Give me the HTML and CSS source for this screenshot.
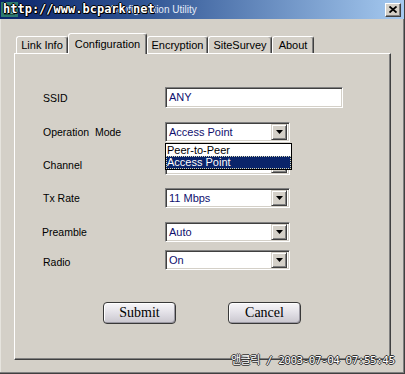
FILE: index.html
```html
<!DOCTYPE html>
<html>
<head>
<meta charset="utf-8">
<title>Configuration Utility</title>
<link rel="stylesheet" href="styles.css">
</head>
<body>
<div class="window">
  <div class="titlebar">
    <span class="app-icon"><span class="app-icon-inner"></span></span>
    <span class="title-text">Configuration Utility</span>
    <span class="close-btn">
      <svg width="8" height="7" viewBox="0 0 8 7"><path d="M0.5 0.5 L7.5 6.5 M7.5 0.5 L0.5 6.5" stroke="#000" stroke-width="1.8"/></svg>
    </span>
    <span class="wm-url">http://www.bcpark.net</span>
  </div>
  <div class="client">
    <div class="tabs">
      <div class="tab tab-link">Link Info</div>
      <div class="tab tab-config active">Configuration</div>
      <div class="tab tab-enc">Encryption</div>
      <div class="tab tab-site">SiteSurvey</div>
      <div class="tab tab-about">About</div>
    </div>
    <div class="panel">
      <div class="form">
        <div class="row">
          <span class="lbl">SSID</span>
          <div class="textbox">ANY</div>
        </div>
        <div class="row row-mode">
          <span class="lbl">Operation&nbsp; Mode</span>
          <div class="select">
            <span class="sel-text">Access Point</span>
            <span class="sel-btn"><svg width="7" height="4" viewBox="0 0 7 4"><polygon points="0,0 7,0 3.5,4" fill="#000"/></svg></span>
            <div class="listbox">
              <div class="opt">Peer-to-Peer</div>
              <div class="opt sel">Access Point</div>
            </div>
          </div>
        </div>
        <div class="row row-channel">
          <span class="lbl">Channel</span>
          <div class="select">
            <span class="sel-text"></span>
            <span class="sel-btn"><svg width="7" height="4" viewBox="0 0 7 4"><polygon points="0,0 7,0 3.5,4" fill="#000"/></svg></span>
          </div>
        </div>
        <div class="row row-tx">
          <span class="lbl">Tx Rate</span>
          <div class="select">
            <span class="sel-text">11 Mbps</span>
            <span class="sel-btn"><svg width="7" height="4" viewBox="0 0 7 4"><polygon points="0,0 7,0 3.5,4" fill="#000"/></svg></span>
          </div>
        </div>
        <div class="row row-pre">
          <span class="lbl lbl-pre">Preamble</span>
          <div class="select">
            <span class="sel-text">Auto</span>
            <span class="sel-btn"><svg width="7" height="4" viewBox="0 0 7 4"><polygon points="0,0 7,0 3.5,4" fill="#000"/></svg></span>
          </div>
        </div>
        <div class="row row-radio">
          <span class="lbl lbl-radio">Radio</span>
          <div class="select">
            <span class="sel-text">On</span>
            <span class="sel-btn"><svg width="7" height="4" viewBox="0 0 7 4"><polygon points="0,0 7,0 3.5,4" fill="#000"/></svg></span>
          </div>
        </div>
      </div>
      <div class="buttons">
        <button class="btn">Submit</button>
        <button class="btn">Cancel</button>
      </div>
    </div>
  </div>
  <div class="wm-date">앤클릭 / 2003-07-04 07:55:45</div>
</div>
</body>
</html>
```
FILE: styles.css
```css
html, body {
  margin: 0;
  padding: 0;
  background: #d4d0c8;
}

.window {
  position: relative;
  width: 405px;
  height: 374px;
  box-sizing: border-box;
  background: #d4d0c8;
  border-right: 1px solid #404040;
  border-bottom: 1px solid #404040;
  box-shadow: inset -1px -1px #808080, inset 1px 0 #e6e4de;
  font-family: "Liberation Sans", Arial, sans-serif;
  overflow: hidden;
}

/* ---------- title bar ---------- */
.titlebar {
  position: relative;
  height: 19px;
  display: flex;
  align-items: center;
  padding: 0 3px 0 1px;
  background: linear-gradient(to right, #0a246a 0%, #2f5493 35%, #a6caf0 100%);
}

.app-icon {
  width: 17px;
  height: 15px;
  background: #2d7a70;
  display: flex;
  align-items: center;
  justify-content: center;
}

.app-icon-inner {
  width: 9px;
  height: 8px;
  background: #5fa89a;
  border: 1px solid #1d4f4a;
}

.title-text {
  margin-left: 92px;
  color: #e4ecf8;
  font-size: 10px;
  line-height: 15px;
}

.close-btn {
  margin-left: auto;
  width: 16px;
  height: 14px;
  box-sizing: border-box;
  background: #d4d0c8;
  border: 1px solid;
  border-color: #fff #404040 #404040 #fff;
  box-shadow: inset -1px -1px #808080;
  display: flex;
  align-items: center;
  justify-content: center;
}

.wm-url {
  position: absolute;
  left: 3px;
  top: 2px;
  font-family: "DejaVu Sans Mono", "Liberation Mono", monospace;
  font-weight: bold;
  font-size: 12px;
  line-height: 15px;
  color: #fff;
  text-shadow: 1px 0 #000, -1px 0 #000, 0 1px #000, 0 -1px #000, 1px 1px #000;
}

/* ---------- client ---------- */
.client {
  padding: 14px 12px 0 14px;
}

.tabs {
  position: relative;
  z-index: 1;
  display: flex;
  align-items: flex-end;
  height: 21px;
  margin: 0 0 -1px 2px;
}

.tab {
  box-sizing: border-box;
  height: 17px;
  margin-bottom: 1px;
  padding-top: 1px;
  border: 1px solid;
  border-bottom: 0;
  border-color: #fff #404040 transparent #fff;
  border-radius: 3px 3px 0 0;
  box-shadow: inset -1px 0 #808080;
  background: #d4d0c8;
  font-size: 11px;
  line-height: 14px;
  color: #000;
  text-align: center;
  white-space: nowrap;
}

.tab.active {
  height: 21px;
  margin-bottom: 0;
  padding-top: 3px;
}

.tab-link { width: 52px; }
.tab-config { width: 79px; }
.tab-enc { width: 61px; }
.tab-site { width: 64px; }
.tab-about { width: 42px; }

.panel {
  box-sizing: border-box;
  width: 377px;
  height: 307px;
  padding: 33px 0 0 28px;
  border: 1px solid;
  border-color: #fff #404040 #404040 #fff;
  box-shadow: inset -1px -1px #808080;
}

/* ---------- form ---------- */
.form {
  display: flex;
  flex-direction: column;
}

.row {
  display: flex;
  align-items: center;
}

.row-mode { margin-top: 14px; }
.row-channel { margin-top: 13px; }
.row-tx { margin-top: 13px; }
.row-pre { margin-top: 14px; }
.row-radio { margin-top: 8px; }

.lbl {
  width: 122px;
  font-size: 10.5px;
  color: #000;
  white-space: nowrap;
}

.lbl-pre {
  margin-left: -1px;
  width: 123px;
}

.lbl-radio {
  padding-top: 3px;
}

.textbox,
.select {
  box-sizing: border-box;
  background: #fff;
  border: 1px solid;
  border-color: #808080 #fff #fff #808080;
  box-shadow: inset 1px 1px #404040, inset -1px -1px #d4d0c8;
  font-size: 11px;
  color: #10106e;
}

.textbox {
  width: 178px;
  height: 21px;
  padding-left: 3px;
  line-height: 19px;
}

.select {
  position: relative;
  width: 125px;
  height: 20px;
  padding: 0 2px 0 3px;
  display: flex;
  align-items: center;
  justify-content: space-between;
}

.sel-text {
  line-height: 14px;
}

.sel-btn {
  box-sizing: border-box;
  width: 16px;
  height: 16px;
  background: #d4d0c8;
  border: 1px solid;
  border-color: #d4d0c8 #404040 #404040 #d4d0c8;
  box-shadow: inset 1px 1px #fff, inset -1px -1px #808080;
  display: flex;
  align-items: center;
  justify-content: center;
}

.listbox {
  position: absolute;
  z-index: 2;
  top: 20px;
  left: -1px;
  box-sizing: border-box;
  width: 127px;
  height: 27px;
  border: 1px solid #000;
  background: #fff;
}

.opt {
  height: 12px;
  padding-left: 1px;
  font-size: 11px;
  line-height: 12px;
  color: #000;
}

.opt.sel {
  height: 13px;
  line-height: 13px;
  background: #0a246a;
  color: #fff;
  outline: 1px dotted #d8d8b0;
  outline-offset: -1px;
}

/* ---------- buttons ---------- */
.buttons {
  display: flex;
  gap: 52px;
  margin: 32px 0 0 60px;
}

.btn {
  box-sizing: border-box;
  width: 73px;
  height: 22px;
  padding: 0;
  border: 1px solid #383838;
  border-radius: 4px;
  background: linear-gradient(#f7f6f9 0%, #e4e2e8 45%, #c9c6ce 100%);
  box-shadow: inset 1px 1px #fff, inset -1px -1px #9a98a2;
  font-family: "Liberation Serif", "Times New Roman", serif;
  font-size: 14px;
  color: #000;
}

/* ---------- watermark ---------- */
.wm-date {
  position: absolute;
  left: 231px;
  top: 354px;
  font-family: "DejaVu Sans Mono", "Noto Sans CJK KR", monospace;
  font-size: 11px;
  line-height: 14px;
  letter-spacing: -0.5px;
  color: #fff;
  white-space: nowrap;
  text-shadow: 1px 0 #333, -1px 0 #333, 0 1px #333, 0 -1px #333;
}
```
